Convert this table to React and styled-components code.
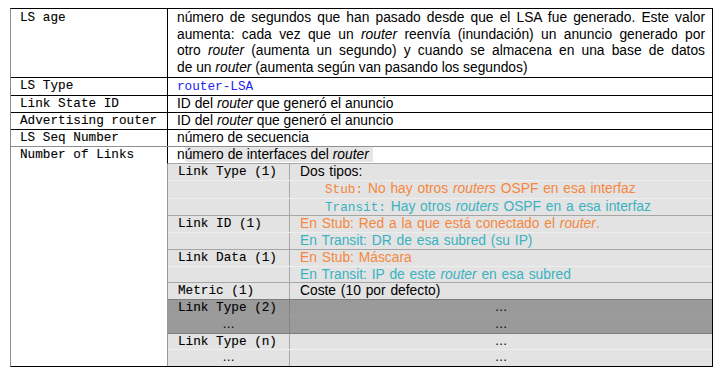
import React from 'react';
import styled, { createGlobalStyle } from 'styled-components';

const MONO = `"Liberation Mono", "Courier New", monospace`;
const SANS = `"Liberation Sans", Arial, sans-serif`;

const ORANGE = '#f6873d';
const TEAL = '#3ab2c2';
const BLUE = '#2222f2';

const GlobalStyle = createGlobalStyle`
  body {
    margin: 0;
    background: #fff;
  }
`;

const Page = styled.div`
  padding: 8px 0 0 10px;
`;

const Table = styled.div`
  width: 703px;
  box-sizing: border-box;
  border: 1px solid #000;
  border-left-color: #8c8c8c;
  color: #000;
`;

const Row = styled.div`
  display: grid;
  grid-template-columns: 156px 1fr;
  border-bottom: 1px solid ${({ $line }) => $line || '#000'};
  &:last-child {
    border-bottom: none;
  }
`;

const Key = styled.div`
  font-family: ${MONO};
  font-size: 12.7px;
  line-height: ${({ $tall }) => ($tall ? '16.5px' : '16px')};
  padding: ${({ $tall }) => ($tall ? '1px 9px' : '0 9px')};
  -webkit-text-stroke: 0.12px #000;
`;

const Value = styled.div`
  border-left: ${({ $open }) => ($open ? 'none' : '1px solid #000')};
  padding: ${({ $open, $tall }) => ($open ? '0' : $tall ? '1px 7px 1px 9px' : '0 7px 0 9px')};
  font-family: ${SANS};
  font-size: 13.8px;
  line-height: ${({ $tall }) => ($tall ? '16.5px' : '16px')};
`;

const Line = styled.span`
  display: block;
  text-align: ${({ $last }) => ($last ? 'left' : 'justify')};
  text-align-last: ${({ $last }) => ($last ? 'left' : 'justify')};
`;

const I = styled.em`
  font-style: italic;
`;

const Code = styled.span`
  font-family: ${MONO};
  font-size: 12.7px;
  word-spacing: 0;
  color: ${({ $color }) => $color || 'inherit'};
`;

const Tint = styled.span`
  color: ${({ $color }) => $color};
`;

const Header = styled.div`
  border-left: 1px solid #000;
  border-bottom: 1px solid #a8a8a8;
  padding: 0 9px;
  line-height: 16px;
`;

const Highlight = styled.span`
  background: #e6e6e6;
  padding-right: 4px;
`;

const Nested = styled.div`
  border-left: 1px solid #9a9a9a;
  background: #e3e3e3;
`;

const SubRow = styled.div`
  display: grid;
  grid-template-columns: 122px 1fr;
  background: ${({ $dark }) => ($dark ? '#9a9a9a' : '#e3e3e3')};
  border-bottom: 1px solid ${({ $line }) => $line};
  line-height: 15.75px;
  &:last-child {
    border-bottom: none;
  }
`;

const SubKey = styled.div`
  box-sizing: border-box;
  border-right: 1px solid ${({ $dark }) => ($dark ? '#848484' : '#a8a8a8')};
  padding-left: ${({ $center }) => ($center ? '0' : '10px')};
  text-align: ${({ $center }) => ($center ? 'center' : 'left')};
  font-family: ${({ $center }) => ($center ? SANS : MONO)};
  font-size: 12.7px;
  -webkit-text-stroke: ${({ $center }) => ($center ? '0' : '0.12px #000')};
`;

const SubVal = styled.div`
  padding-left: ${({ $indent, $center }) => ($center ? '0' : $indent ? '35px' : '10px')};
  text-align: ${({ $center }) => ($center ? 'center' : 'left')};
  font-size: ${({ $center }) => ($center ? '12.7px' : '13.8px')};
  word-spacing: 1px;
`;

const groups = [
  {
    rows: [
      { k: 'Link Type (1)', v: 'Dos tipos:' },
      {
        indent: true,
        v: (
          <Tint $color={ORANGE}>
            <Code>Stub:</Code> No hay otros <I>routers</I> OSPF en esa interfaz
          </Tint>
        ),
      },
      {
        indent: true,
        v: (
          <Tint $color={TEAL}>
            <Code>Transit:</Code> Hay otros <I>routers</I> OSPF en a esa interfaz
          </Tint>
        ),
      },
    ],
  },
  {
    rows: [
      {
        k: 'Link ID (1)',
        v: (
          <Tint $color={ORANGE}>
            En Stub: Red a la que está conectado el <I>router</I>.
          </Tint>
        ),
      },
      { v: <Tint $color={TEAL}>En Transit: DR de esa subred (su IP)</Tint> },
    ],
  },
  {
    rows: [
      { k: 'Link Data (1)', v: <Tint $color={ORANGE}>En Stub: Máscara</Tint> },
      {
        v: (
          <Tint $color={TEAL}>
            En Transit: IP de este <I>router</I> en esa subred
          </Tint>
        ),
      },
    ],
  },
  { rows: [{ k: 'Metric (1)', v: 'Coste (10 por defecto)' }] },
  {
    dark: true,
    rows: [
      { k: 'Link Type (2)', v: '…', center: true },
      { k: '…', keyCenter: true, v: '…', center: true },
    ],
  },
  {
    rows: [
      { k: 'Link Type (n)', v: '…', center: true },
      { k: '…', keyCenter: true, v: '…', center: true },
    ],
  },
];

// separator under a sub-row: faint inside a group, gray between groups
function lineAfter(gi, ri) {
  const group = groups[gi];
  const next = groups[gi + 1];
  if (ri < group.rows.length - 1) return group.dark ? '#9d9d9d' : '#eeeeee';
  if (group.dark || (next && next.dark)) return '#7e7e7e';
  return '#a6a6a6';
}

const simpleRows = [
  { k: 'LS Type', v: <Code $color={BLUE}>router-LSA</Code> },
  { k: 'Link State ID', v: <>ID del <I>router</I> que generó el anuncio</> },
  { k: 'Advertising router', v: <>ID del <I>router</I> que generó el anuncio</> },
  { k: 'LS Seq Number', v: 'número de secuencia', line: '#8f8f8f' },
];

export default function App() {
  return (
    <Page>
      <GlobalStyle />
      <Table>
        <Row>
          <Key $tall>LS age</Key>
          <Value $tall>
            <Line>
              número de segundos que han pasado desde que el LSA fue generado. Este valor
            </Line>
            <Line>
              aumenta: cada vez que un <I>router</I> reenvía (inundación) un anuncio generado por
            </Line>
            <Line>
              otro <I>router</I> (aumenta un segundo) y cuando se almacena en una base de datos
            </Line>
            <Line $last>
              de un <I>router</I> (aumenta según van pasando los segundos)
            </Line>
          </Value>
        </Row>
        {simpleRows.map((r) => (
          <Row key={r.k} $line={r.line}>
            <Key>{r.k}</Key>
            <Value>{r.v}</Value>
          </Row>
        ))}
        <Row>
          <Key>Number of Links</Key>
          <Value $open>
            <Header>
              n<Highlight>úmero de interfaces del <I>router</I></Highlight>
            </Header>
            <Nested>
              {groups.map((g, gi) =>
                g.rows.map((r, ri) => (
                  <SubRow key={`${gi}-${ri}`} $dark={g.dark} $line={lineAfter(gi, ri)}>
                    <SubKey $dark={g.dark} $center={r.keyCenter}>
                      {r.k || ''}
                    </SubKey>
                    <SubVal $indent={r.indent} $center={r.center}>
                      {r.v}
                    </SubVal>
                  </SubRow>
                ))
              )}
            </Nested>
          </Value>
        </Row>
      </Table>
    </Page>
  );
}
